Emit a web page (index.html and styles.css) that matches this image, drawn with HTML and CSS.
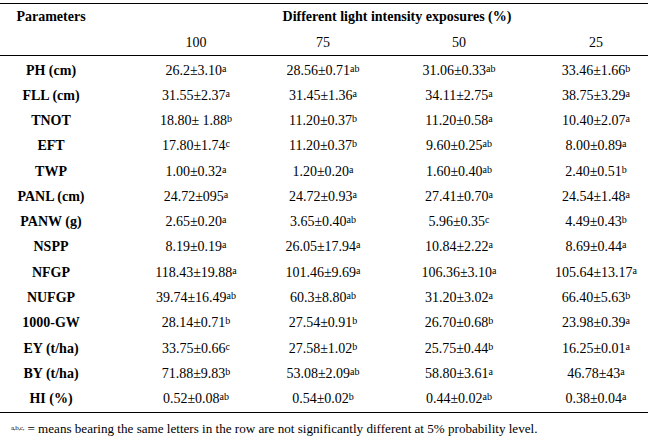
FILE: index.html
```html
<!DOCTYPE html>
<html>
<head>
<meta charset="utf-8">
<link rel="stylesheet" href="styles.css">
</head>
<body>
<div class="table">
  <div class="head">
    <div class="row hrow1">
      <div class="lab b">Parameters</div>
      <div class="span b">Different light intensity exposures (%)</div>
    </div>
    <div class="row hrow2">
      <div class="lab"></div>
      <div class="c c1">100</div>
      <div class="c c2">75</div>
      <div class="c c3">50</div>
      <div class="c c4">25</div>
    </div>
  </div>
  <div class="body">
    <div class="row"><div class="lab b">PH (cm)</div><div class="c c1">26.2±3.10<sup>a</sup></div><div class="c c2">28.56±0.71<sup>ab</sup></div><div class="c c3">31.06±0.33<sup>ab</sup></div><div class="c c4">33.46±1.66<sup>b</sup></div></div>
    <div class="row"><div class="lab b">FLL (cm)</div><div class="c c1">31.55±2.37<sup>a</sup></div><div class="c c2">31.45±1.36<sup>a</sup></div><div class="c c3">34.11±2.75<sup>a</sup></div><div class="c c4">38.75±3.29<sup>a</sup></div></div>
    <div class="row"><div class="lab b">TNOT</div><div class="c c1">18.80± 1.88<sup>b</sup></div><div class="c c2">11.20±0.37<sup>b</sup></div><div class="c c3">11.20±0.58<sup>a</sup></div><div class="c c4">10.40±2.07<sup>a</sup></div></div>
    <div class="row"><div class="lab b">EFT</div><div class="c c1">17.80±1.74<sup>c</sup></div><div class="c c2">11.20±0.37<sup>b</sup></div><div class="c c3">9.60±0.25<sup>ab</sup></div><div class="c c4">8.00±0.89<sup>a</sup></div></div>
    <div class="row"><div class="lab b">TWP</div><div class="c c1">1.00±0.32<sup>a</sup></div><div class="c c2">1.20±0.20<sup>a</sup></div><div class="c c3">1.60±0.40<sup>ab</sup></div><div class="c c4">2.40±0.51<sup>b</sup></div></div>
    <div class="row"><div class="lab b">PANL (cm)</div><div class="c c1">24.72±095<sup>a</sup></div><div class="c c2">24.72±0.93<sup>a</sup></div><div class="c c3">27.41±0.70<sup>a</sup></div><div class="c c4">24.54±1.48<sup>a</sup></div></div>
    <div class="row"><div class="lab b">PANW (g)</div><div class="c c1">2.65±0.20<sup>a</sup></div><div class="c c2">3.65±0.40<sup>ab</sup></div><div class="c c3">5.96±0.35<sup>c</sup></div><div class="c c4">4.49±0.43<sup>b</sup></div></div>
    <div class="row"><div class="lab b">NSPP</div><div class="c c1">8.19±0.19<sup>a</sup></div><div class="c c2">26.05±17.94<sup>a</sup></div><div class="c c3">10.84±2.22<sup>a</sup></div><div class="c c4">8.69±0.44<sup>a</sup></div></div>
    <div class="row"><div class="lab b">NFGP</div><div class="c c1">118.43±19.88<sup>a</sup></div><div class="c c2">101.46±9.69<sup>a</sup></div><div class="c c3">106.36±3.10<sup>a</sup></div><div class="c c4">105.64±13.17<sup>a</sup></div></div>
    <div class="row"><div class="lab b">NUFGP</div><div class="c c1">39.74±16.49<sup>ab</sup></div><div class="c c2">60.3±8.80<sup>ab</sup></div><div class="c c3">31.20±3.02<sup>a</sup></div><div class="c c4">66.40±5.63<sup>b</sup></div></div>
    <div class="row"><div class="lab b">1000-GW</div><div class="c c1">28.14±0.71<sup>b</sup></div><div class="c c2">27.54±0.91<sup>b</sup></div><div class="c c3">26.70±0.68<sup>b</sup></div><div class="c c4">23.98±0.39<sup>a</sup></div></div>
    <div class="row"><div class="lab b">EY (t/ha)</div><div class="c c1">33.75±0.66<sup>c</sup></div><div class="c c2">27.58±1.02<sup>b</sup></div><div class="c c3">25.75±0.44<sup>b</sup></div><div class="c c4">16.25±0.01<sup>a</sup></div></div>
    <div class="row"><div class="lab b">BY (t/ha)</div><div class="c c1">71.88±9.83<sup>b</sup></div><div class="c c2">53.08±2.09<sup>ab</sup></div><div class="c c3">58.80±3.61<sup>a</sup></div><div class="c c4">46.78±43<sup>a</sup></div></div>
    <div class="row"><div class="lab b">HI (%)</div><div class="c c1">0.52±0.08<sup>ab</sup></div><div class="c c2">0.54±0.02<sup>b</sup></div><div class="c c3">0.44±0.02<sup>ab</sup></div><div class="c c4">0.38±0.04<sup>a</sup></div></div>
  </div>
</div>
<p class="note"><sup>a,b,c,</sup> = means bearing the same letters in the row are not significantly different at 5% probability level.</p>
</body>
</html>
```

FILE: styles.css
```css
html, body {
  margin: 0;
  padding: 0;
  background: #fff;
}
body {
  font-family: "Liberation Serif", "Times New Roman", serif;
  font-size: 14px;
  color: #000;
}
.table {
  width: 648px;
  margin-top: 3px;
  border-top: 1px solid #000;
  border-bottom: 1px solid #000;
}
.head {
  border-bottom: 1px solid #000;
}
.row {
  display: flex;
  align-items: center;
}
.hrow1 {
  height: 26px;
}
.hrow2 {
  height: 25px;
}
.body {
  padding-top: 2px;
}
.body .row {
  height: 25.27px;
}
.b {
  font-weight: bold;
}
.lab {
  width: 134px;
  padding-right: 32px;
  box-sizing: border-box;
  text-align: center;
  flex: none;
}
.span {
  flex: 1;
  text-align: center;
  padding-left: 12px;
}
.c {
  text-align: center;
  box-sizing: border-box;
  flex: none;
  white-space: nowrap;
}
.c1 { width: 124px; }
.c2 { width: 130px; }
.c3 { width: 142px; }
.c4 { width: 118px; padding-left: 14px; }
sup {
  font-size: 10px;
  vertical-align: 3px;
  line-height: 0;
}
.note {
  margin: 8px 0 0 11px;
  font-size: 13.1px;
  line-height: 16px;
  white-space: nowrap;
}
.note sup {
  font-size: 7px;
  vertical-align: 3px;
  letter-spacing: -0.3px;
}
```
